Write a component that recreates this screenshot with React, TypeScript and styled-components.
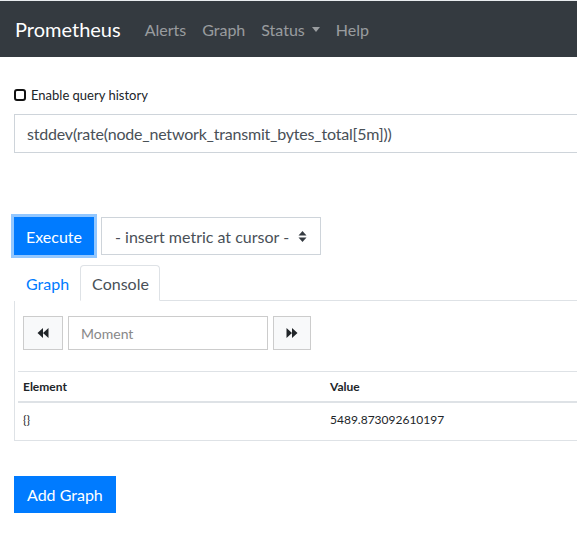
import styled, { createGlobalStyle } from 'styled-components';

const colors = {
  dark: '#343a40',
  blue: '#007bff',
  border: '#ced4da',
  line: '#dee2e6',
  text: '#212529',
  muted: '#495057',
};

const GlobalStyle = createGlobalStyle`
  body {
    margin: 0;
    overflow: hidden;
    background: #fff;
    font-family: Lato, "Noto Sans", sans-serif;
    color: ${colors.text};
  }
`;

export default function App() {
  return (
    <>
      <GlobalStyle />
      <Navbar>
        <Brand>Prometheus</Brand>
        <NavLink>Alerts</NavLink>
        <NavLink>Graph</NavLink>
        <NavLink>
          Status <Caret />
        </NavLink>
        <NavLink>Help</NavLink>
      </Navbar>

      <Main>
        <HistoryToggle>
          <CheckBox />
          Enable query history
        </HistoryToggle>

        <QueryInput>stddev(rate(node_network_transmit_bytes_total[5m]))</QueryInput>

        <ActionRow>
          <PrimaryButton $focused>Execute</PrimaryButton>
          <MetricSelect>
            - insert metric at cursor -
            <SelectArrows width="9" height="13" viewBox="0 0 9 13">
              <path d="M4.5 1 L8.5 5.5 H0.5 Z" fill="#343a40" />
              <path d="M4.5 12 L8.5 7.5 H0.5 Z" fill="#343a40" />
            </SelectArrows>
          </MetricSelect>
        </ActionRow>

        <Tabs>
          <Tab>Graph</Tab>
          <Tab $active>Console</Tab>
        </Tabs>

        <TabPanel>
          <TimeControls>
            <StepButton>
              <svg width="12" height="12" viewBox="0 0 12 12">
                <path d="M6 1 V11 L0.5 6 Z M11.5 1 V11 L6 6 Z" fill="#212529" />
              </svg>
            </StepButton>
            <MomentInput>Moment</MomentInput>
            <StepButton>
              <svg width="12" height="12" viewBox="0 0 12 12">
                <path d="M0.5 1 V11 L6 6 Z M6 1 V11 L11.5 6 Z" fill="#212529" />
              </svg>
            </StepButton>
          </TimeControls>

          <ResultTable>
            <thead>
              <tr>
                <HeadCell $wide>Element</HeadCell>
                <HeadCell>Value</HeadCell>
              </tr>
            </thead>
            <tbody>
              <tr>
                <Cell>{'{}'}</Cell>
                <Cell>5489.873092610197</Cell>
              </tr>
            </tbody>
          </ResultTable>
        </TabPanel>

        <AddButton>Add Graph</AddButton>
      </Main>
    </>
  );
}

const Navbar = styled.nav`
  display: flex;
  align-items: center;
  height: 56px;
  padding: 0 15px;
  border-top: 1px solid #e9ecef;
  background-color: ${colors.dark};
`;

const Brand = styled.span`
  margin-right: 16px;
  font-size: 20px;
  color: #fff;
`;

const NavLink = styled.span`
  display: flex;
  align-items: center;
  padding: 0 8px;
  font-size: 16px;
  color: rgba(255, 255, 255, 0.5);
`;

const Caret = styled.span`
  display: inline-block;
  margin-left: 7px;
  border-top: 5px solid rgba(255, 255, 255, 0.5);
  border-left: 4.5px solid transparent;
  border-right: 4.5px solid transparent;
`;

const Main = styled.main`
  width: 760px;
  padding: 0 14px;
`;

const HistoryToggle = styled.label`
  display: flex;
  align-items: center;
  gap: 5px;
  height: 16px;
  margin-top: 30px;
  font-size: 13px;
  color: ${colors.text};
`;

const CheckBox = styled.span`
  box-sizing: border-box;
  width: 12px;
  height: 12px;
  border: 2px solid #111;
  border-radius: 3px;
`;

const QueryInput = styled.div`
  box-sizing: border-box;
  display: flex;
  align-items: center;
  height: 39px;
  margin-top: 11px;
  padding: 0 12px;
  border: 1px solid ${colors.border};
  font-size: 16px;
  letter-spacing: -0.2px;
  color: ${colors.muted};
`;

const ActionRow = styled.div`
  display: flex;
  gap: 7px;
  margin-top: 64px;
`;

const PrimaryButton = styled.button<{ $focused?: boolean }>`
  height: 38px;
  padding: 0 11px;
  border: 1px solid ${colors.blue};
  background-color: ${colors.blue};
  color: #fff;
  font-family: inherit;
  font-size: 16px;
  box-shadow: ${(p) => (p.$focused ? '0 0 0 3px rgba(38, 143, 255, 0.5)' : 'none')};
`;

const MetricSelect = styled.div`
  box-sizing: border-box;
  display: flex;
  align-items: center;
  justify-content: space-between;
  width: 220px;
  height: 38px;
  padding: 0 13px 0 13px;
  border: 1px solid ${colors.border};
  font-size: 16px;
  color: ${colors.muted};
`;

const SelectArrows = styled.svg`
  flex: none;
`;

const Tabs = styled.div`
  display: flex;
  margin-top: 10px;
  border-bottom: 1px solid ${colors.line};
`;

const Tab = styled.div<{ $active?: boolean }>`
  display: flex;
  align-items: center;
  height: 34px;
  padding: 0 10px 0 11px;
  margin-bottom: -1px;
  border: 1px solid ${(p) => (p.$active ? colors.line : 'transparent')};
  border-bottom-color: ${(p) => (p.$active ? '#fff' : 'transparent')};
  border-radius: 4px 4px 0 0;
  background: #fff;
  font-size: 16px;
  color: ${(p) => (p.$active ? colors.muted : colors.blue)};
`;

const TabPanel = styled.section`
  padding: 15px 0 0 3px;
  border: 1px solid ${colors.line};
  border-top: none;
`;

const TimeControls = styled.div`
  display: flex;
  gap: 5px;
  margin-left: 5px;
`;

const StepButton = styled.button`
  display: flex;
  align-items: center;
  justify-content: center;
  width: 40px;
  height: 34px;
  padding: 0;
  border: 1px solid #ccc;
  background-color: #f8f9fa;

  &:last-child {
    width: 38px;
  }
`;

const MomentInput = styled.div`
  box-sizing: border-box;
  display: flex;
  align-items: center;
  width: 200px;
  height: 34px;
  padding: 0 12px;
  border: 1px solid #ccc;
  font-size: 14px;
  color: #888;
`;

const ResultTable = styled.table`
  width: 100%;
  margin-top: 21px;
  border-collapse: collapse;
  font-size: 12px;
`;

const HeadCell = styled.th<{ $wide?: boolean }>`
  width: ${(p) => (p.$wide ? '297px' : 'auto')};
  height: 29px;
  padding: 0 5px;
  border-top: 1px solid ${colors.line};
  border-bottom: 2px solid ${colors.line};
  text-align: left;
  font-weight: 700;
`;

const Cell = styled.td`
  height: 38px;
  padding: 0 5px;
  vertical-align: top;
  padding-top: 9px;
  box-sizing: border-box;
`;

const AddButton = styled(PrimaryButton)`
  height: 37px;
  margin-top: 35px;
  padding: 0 12px;
`;
